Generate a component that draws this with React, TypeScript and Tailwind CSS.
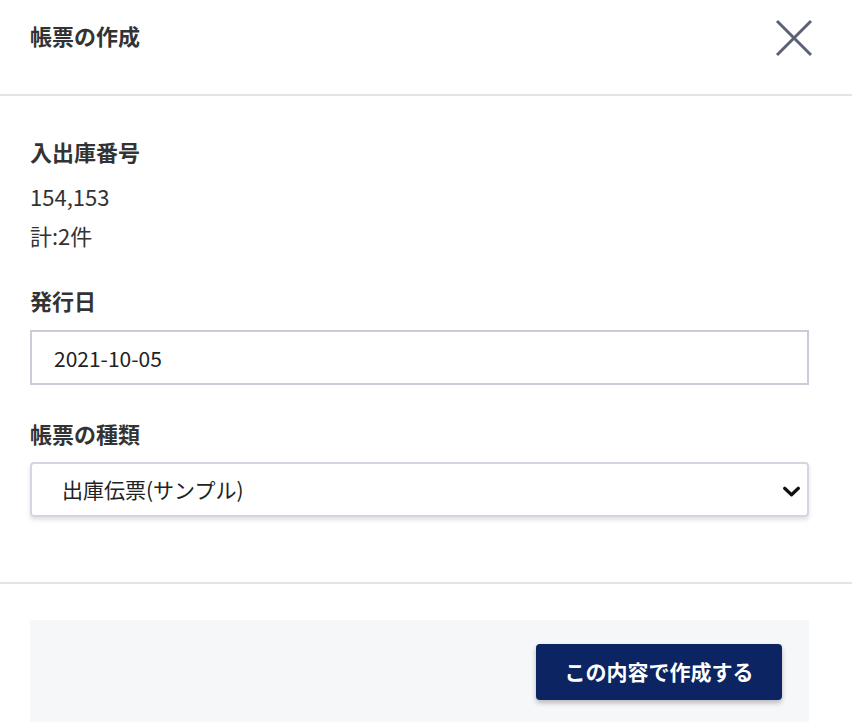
import { useState } from 'react';

const font = { fontFamily: '"Noto Sans CJK JP", "Noto Sans", sans-serif' };

export default function App() {
  const [date, setDate] = useState('2021-10-05');
  const [kind, setKind] = useState('出庫伝票(サンプル)');

  return (
    <div style={font} className="w-[852px] h-[722px] overflow-hidden bg-white text-[#333333]">
      {/* header */}
      <div className="relative h-[96px] border-b-2 border-[#e4e4e4] pl-[30px]">
        <h1 className="pt-[20px] text-[22px] leading-[30px] font-bold">帳票の作成</h1>
        <button className="absolute right-[38px] top-[18px] w-[40px] h-[40px] flex items-center justify-center">
          <svg viewBox="0 0 40 40" className="w-[40px] h-[40px]" fill="none" stroke="#5b6275" strokeWidth="3">
            <path d="M3 3 L37 37 M37 3 L3 37" />
          </svg>
        </button>
      </div>

      {/* body */}
      <div className="border-b-2 border-[#e4e4e4] pt-[40px] pb-[65px] pl-[30px] pr-[43px]">
        <div className="text-[22px] leading-[30px] font-bold">入出庫番号</div>
        <div className="mt-[15px] text-[22px] leading-[30px]">154,153</div>
        <div className="mt-[9px] text-[22px] leading-[30px]">計:2件</div>

        <div className="mt-[35px] text-[22px] leading-[30px] font-bold">発行日</div>
        <input
          value={date}
          onChange={(e) => setDate(e.target.value)}
          className="mt-[15px] block w-full h-[55px] border-2 border-[#caccda] px-[22px] text-[21px] text-[#222222] outline-none"
        />

        <div className="mt-[33px] text-[22px] leading-[30px] font-bold">帳票の種類</div>
        <div className="relative mt-[14px] h-[55px] rounded-[4px] border-2 border-[#d3d5e0] shadow-[0_3px_4px_rgba(0,0,0,0.12)]">
          <select
            value={kind}
            onChange={(e) => setKind(e.target.value)}
            className="appearance-none w-full h-full bg-transparent pl-[30px] pr-[40px] text-[21px] text-[#222222] outline-none"
          >
            <option>出庫伝票(サンプル)</option>
            <option>納品書</option>
          </select>
          <svg viewBox="0 0 20 12" className="pointer-events-none absolute right-[6px] top-[22px] w-[19px] h-[11px]" fill="none" stroke="#111111" strokeWidth="3.5" strokeLinecap="round" strokeLinejoin="round">
            <path d="M2.5 2.5 L10 9.5 L17.5 2.5" />
          </svg>
        </div>
      </div>

      {/* footer */}
      <div className="pt-[36px] pl-[30px] pr-[43px]">
        <div className="flex justify-end bg-[#f6f7f9] pt-[24px] pb-[24px] pr-[27px]">
          <button className="w-[246px] h-[56px] rounded-[4px] bg-[#0c2562] text-white text-[21px] font-bold shadow-[0_3px_5px_rgba(0,0,0,0.25)]">
            この内容で作成する
          </button>
        </div>
      </div>
    </div>
  );
}
